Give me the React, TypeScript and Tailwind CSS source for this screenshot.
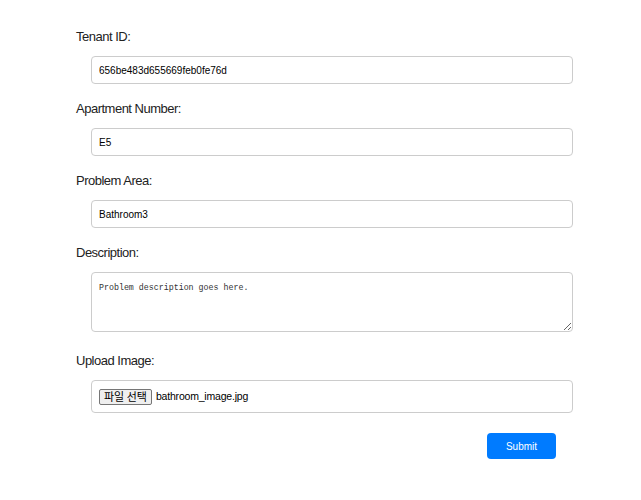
import React from "react";

export default function App() {
  const label = "block h-[18px] leading-[18px] text-[13px] tracking-[-0.5px] text-[#222] font-['Liberation_Sans',Arial,sans-serif]";
  const input =
    "block ml-[15px] w-[482px] h-[28px] border border-[#ccc] rounded-[4px] px-[7px] text-[10px] text-black bg-white outline-none font-['Liberation_Sans',Arial,sans-serif]";
  return (
    <div className="w-[641px] h-[500px] bg-white font-['Liberation_Sans',Arial,sans-serif]">
      <form className="pl-[76px] pt-[28px]" onSubmit={(e) => e.preventDefault()}>
        <label className={label}>Tenant ID:</label>
        <input className={input + " mt-[10px]"} readOnly defaultValue="656be483d655669feb0fe76d" />

        <label className={label + " mt-[16px]"}>Apartment Number:</label>
        <input className={input + " mt-[10px]"} readOnly defaultValue="E5" />

        <label className={label + " mt-[16px]"}>Problem Area:</label>
        <input className={input + " mt-[10px]"} readOnly defaultValue="Bathroom3" />

        <label className={label + " mt-[16px]"}>Description:</label>
        <textarea
          className="block mt-[10px] ml-[15px] w-[482px] h-[60px] border border-[#ccc] rounded-[4px] px-[7px] pt-[9px] text-[8.3px] leading-[11px] text-[#333] bg-white outline-none resize font-['Liberation_Mono','DejaVu_Sans_Mono',monospace]"
          readOnly
          defaultValue="Problem description goes here."
        />

        <label className={label + " mt-[20px]"}>Upload Image:</label>
        <div className="mt-[10px] ml-[15px] w-[482px] h-[33px] border border-[#ccc] rounded-[4px] flex items-center px-[7px]">
          <span className="h-[16px] px-[4px] flex items-center border border-[#767676] bg-[#efefef] rounded-[2px] text-[11px] text-black leading-none font-['Noto_Sans_CJK_KR',sans-serif]">
            파일 선택
          </span>
          <span className="ml-[4px] text-[10.5px] tracking-[-0.2px] text-black">bathroom_image.jpg</span>
        </div>

        <div className="mt-[20px] ml-[411px]">
          <button
            type="submit"
            className="w-[69px] h-[26px] bg-[#007bff] text-white text-[10px] rounded-[4px] flex items-center justify-center"
          >
            Submit
          </button>
        </div>
      </form>
    </div>
  );
}
